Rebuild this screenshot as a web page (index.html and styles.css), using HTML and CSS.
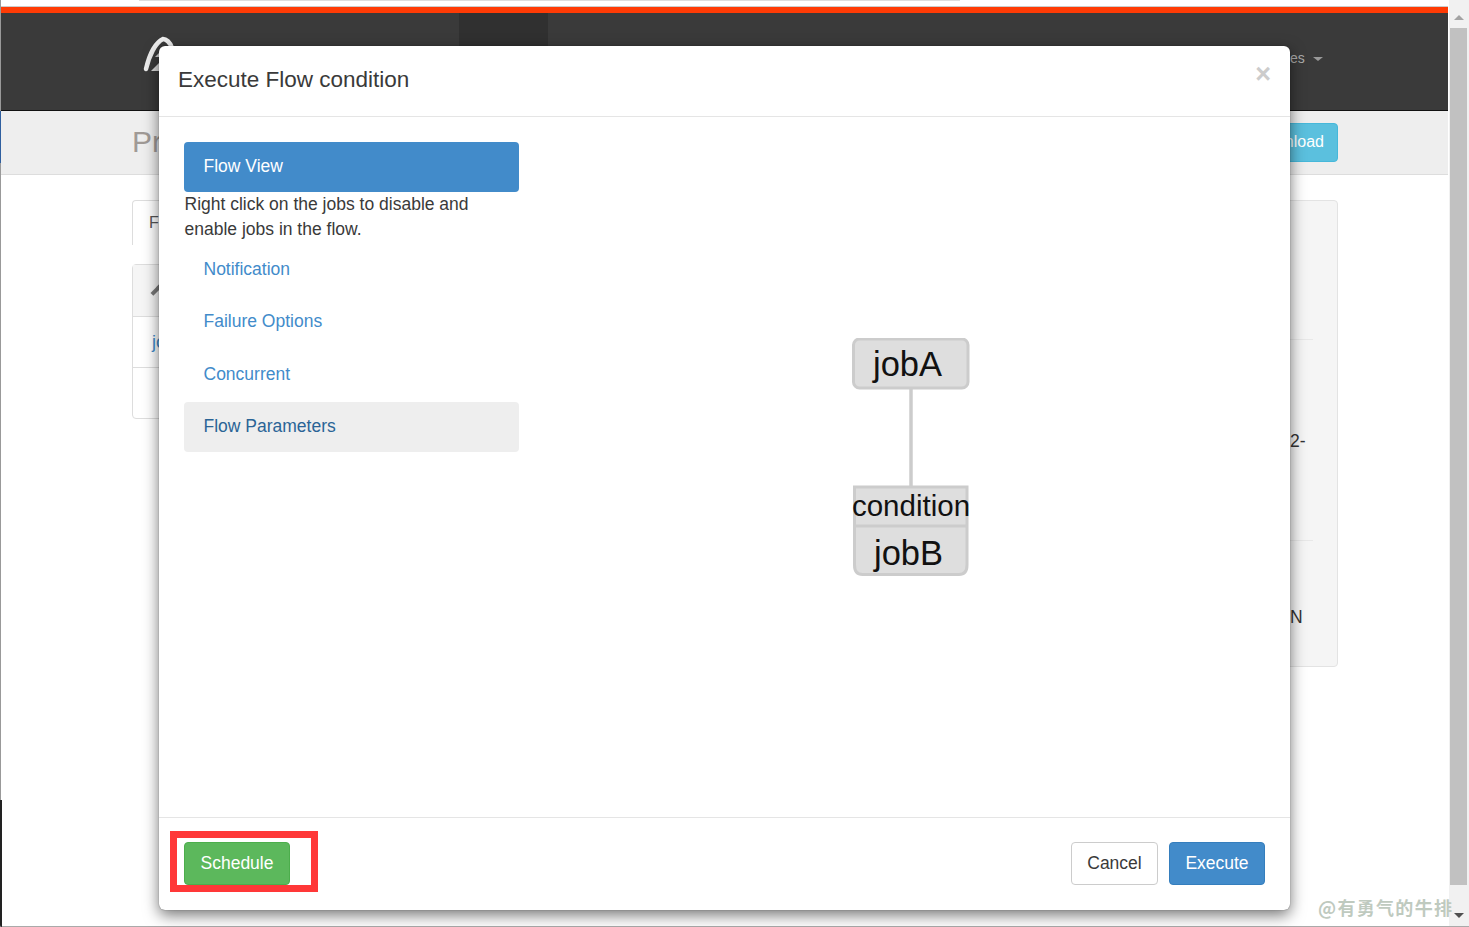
FILE: index.html
```html
<!DOCTYPE html>
<html lang="en">
<head>
<meta charset="utf-8">
<title>Execute Flow condition</title>
<link rel="stylesheet" href="styles.css">
</head>
<body>
<div class="window">
  <div class="page">
    <div class="address-strip"><div class="address-input"></div></div>
    <div class="accent"></div>
    <header class="navbar">
      <svg class="logo" viewBox="0 0 40 44" width="40" height="44"><path d="M5 33 C8 20 14 7 22 3 C25 3 29 6 31 12" fill="none" stroke="#eee" stroke-width="4.500" stroke-linecap="round"/><path d="M10 35 L19 26 V35 Z" fill="#ddd"/><path d="M14 21 L19 16 V21 Z" fill="#ccc"/></svg>
      <div class="nav-active"></div>
      <div class="nav-user">es <span class="caret"></span></div>
    </header>
    <section class="subhead">
      <h1 class="subhead-title">Project</h1>
      <a class="btn-info">Download</a>
    </section>
    <main class="content">
      <div class="left-col">
        <div class="tab">Flow</div>
        <div class="table">
          <div class="table-row table-head"><span class="chev"></span></div>
          <div class="table-row link">jobA</div>
          <div class="table-row"></div>
        </div>
      </div>
      <aside class="side-panel">
        <div class="side-sec">2-</div>
        <div class="side-sec">N</div>
      </aside>
    </main>
  </div>
  <div class="scrollbar">
    <span class="arrow-up"></span>
    <div class="thumb"></div>
    <span class="arrow-down"></span>
  </div>
</div>
<div class="edge-blue"></div>
<div class="edge-dark"></div>

<div class="modal">
  <div class="modal-header">
    <h4 class="modal-title">Execute Flow condition</h4>
    <span class="close">×</span>
  </div>
  <div class="modal-body">
    <nav class="pills">
      <a class="pill pill-active">Flow View</a>
      <p class="pill-note">Right click on the jobs to disable and enable jobs in the flow.</p>
      <a class="pill">Notification</a>
      <a class="pill">Failure Options</a>
      <a class="pill">Concurrent</a>
      <a class="pill pill-hover">Flow Parameters</a>
    </nav>
    <div class="graph">
      <svg class="graph-svg" viewBox="0 0 122 242" width="122" height="242">
        <line x1="61" y1="50" x2="61" y2="149" class="edge"/>
        <rect x="3.500" y="1" width="114.500" height="49" rx="6" class="node"/>
        <path d="M4.500 149 H117 V227 Q117 236.500 109 236.500 H12.500 Q4.500 236.500 4.500 227 Z" class="node"/>
        <line x1="4.500" y1="188" x2="117" y2="188" class="edge-thin"/>
        <text x="57.500" y="38" class="job-label">jobA</text>
        <text x="61" y="178" class="cond-label">condition</text>
        <text x="58.500" y="227" class="job-label">jobB</text>
      </svg>
    </div>
  </div>
  <div class="modal-footer">
    <div class="highlight"><button class="btn btn-success">Schedule</button></div>
    <div class="footer-right">
      <button class="btn btn-default">Cancel</button>
      <button class="btn btn-primary">Execute</button>
    </div>
  </div>
</div>
<div class="watermark">@有勇气的牛排</div>
</body>
</html>
```
FILE: styles.css
```css
*, *::before { box-sizing: border-box; }
html, body { margin: 0; height: 100%; overflow: hidden; }
body { font-family: "Liberation Sans", Arial, sans-serif; font-size: 17.500px; color: #3a3a3a; background: #fff; }

.window { display: flex; height: 927px; border-left: 1px solid #999; border-bottom: 1px solid #aaa; }
.page { width: 1447px; display: flex; flex-direction: column; flex: none; }
.address-strip { height: 7px; background: #fff; border-bottom: 1px solid #ccc; }
.address-input { height: 1px; margin: 0 488px 0 138px; background: #ddd; }
.accent { height: 6px; background: #ff3b05; }
.navbar { height: 98px; background: #3a3a3a; border-bottom: 1px solid #111; position: relative; display: flex; padding-left: 140px; flex: none; }
.logo { margin-top: 23px; flex: none; }
.nav-active { position: absolute; left: 458px; top: 0; width: 89px; height: 97px; background: #303030; }
.nav-user { position: absolute; left: 1289px; top: 35px; font-size: 14px; color: #aaa; line-height: 20px; white-space: nowrap; }
.caret { display: inline-block; margin-left: 4px; vertical-align: middle; border-top: 4px solid #999; border-left: 5px solid transparent; border-right: 5px solid transparent; }
.subhead { height: 64px; background: #eee; border-bottom: 1px solid #ddd; display: flex; justify-content: space-between; align-items: center; padding: 0 110px 0 131px; flex: none; }
.subhead-title { margin: 0 0 2px; font-size: 30px; font-weight: 400; color: #a09a96; line-height: 36px; }
.btn-info { width: 120px; height: 39px; background: #5bc0de; border: 1px solid #46b8da; border-radius: 4px; color: #fff; font-size: 16px; line-height: 36px; text-align: right; padding-right: 13px; }
.content { display: flex; justify-content: space-between; padding: 25px 110px 0 131px; }
.left-col { width: 300px; }
.tab { height: 45px; border: 1px solid #ddd; border-bottom: 0; border-radius: 4px 4px 0 0; padding: 12px 16px; font-size: 16px; color: #555; line-height: 20px; }
.table { margin-top: 19px; height: 155px; border: 1px solid #ddd; border-radius: 4px; }
.table-row { height: 51px; border-bottom: 1px solid #ddd; padding: 14px 19px; line-height: 22px; }
.table-head { height: 52px; background: #f5f5f5; padding-left: 20px; }
.table-row:last-child { border-bottom: 0; }
.chev { display: block; width: 12px; height: 12px; border-top: 4px solid #777; border-left: 4px solid #777; transform: rotate(45deg); margin-top: 8px; }
.link { color: #428bca; font-size: 18px; }
.side-panel { width: 300px; height: 467px; background: #f5f5f5; border: 1px solid #e3e3e3; border-radius: 4px; }
.side-sec { height: 201px; margin: 138px 24px 0 0; padding: 90px 0 0 251px; line-height: 22px; border-top: 1px solid #e8e8e8; font-size: 17.500px; color: #333; }
.side-sec + .side-sec { margin-top: 0; padding-top: 65px; }

.scrollbar { width: 21px; padding: 0 2px 0 1px; background: #f1f1f1; border-left: 1px solid #fff; display: flex; flex-direction: column; align-items: stretch; position: relative; flex: none; }
.thumb { height: 857px; background: #c1c1c1; margin: 28px 0 0; }
.arrow-up { position: absolute; left: 5px; top: 15px; border-bottom: 5px solid #a3a3a3; border-left: 5px solid transparent; border-right: 5px solid transparent; }
.arrow-down { position: absolute; left: 5px; top: 913px; border-top: 5px solid #505050; border-left: 5px solid transparent; border-right: 5px solid transparent; }
.edge-blue { position: absolute; left: 0; top: 111px; width: 1px; height: 52px; background: #2f5f9f; }
.edge-dark { position: absolute; left: 0; top: 800px; width: 2px; height: 127px; background: #222; border-radius: 0 0 0 3px; }

.modal { position: absolute; left: 159px; top: 46px; width: 1131px; height: 864px; background: #fff; border-radius: 6px; box-shadow: 0 5px 15px rgba(0,0,0,.55), 0 0 1px rgba(0,0,0,.6); display: flex; flex-direction: column; }
.modal-header { height: 71px; border-bottom: 1px solid #e5e5e5; display: flex; justify-content: space-between; padding: 19px 19px 0 19px; flex: none; }
.modal-title { margin: 0; font-size: 22.500px; font-weight: 400; line-height: 30px; color: #3a3a3a; }
.close { font-size: 27px; font-weight: 700; line-height: 18px; color: #ccc; margin-top: 0; }
.modal-body { flex: 1; display: flex; padding: 25px; }
.pills { width: 335px; flex: none; display: flex; flex-direction: column; gap: 2.600px; }
.pill { height: 50px; padding: 12px 19.500px; line-height: 25px; color: #428bca; border-radius: 4px; display: block; }
.pill-active { background: #428bca; color: #fff; }
.pill-hover { background: #eee; color: #2a6496; }
.pill-note { margin: -2.600px 0 0 0; padding-left: 0.500px; line-height: 25px; height: 50px; }
.graph { flex: 1; position: relative; display: flex; justify-content: center; padding: 196px 0 0 38px; }
.graph-svg { display: block; }
.node { fill: #dedede; stroke: #ccc; stroke-width: 3; }
.edge { stroke: #ccc; stroke-width: 3.500; }
.edge-thin { stroke: #ccc; stroke-width: 3; }
.job-label { font-size: 34.500px; text-anchor: middle; fill: #111; }
.cond-label { font-size: 29.500px; text-anchor: middle; fill: #111; }

.modal-footer { height: 93px; border-top: 1px solid #e5e5e5; display: flex; justify-content: space-between; align-items: flex-start; padding: 24px 25px 0; flex: none; }
.highlight { position: relative; }
.highlight::before { content: ""; position: absolute; left: -14px; top: -11px; width: 148px; height: 61px; border: 7px solid #ff3838; }
.footer-right { display: flex; gap: 11px; }
.btn { height: 43px; border-radius: 4px; font-family: inherit; font-size: 17.500px; border: 1px solid transparent; padding: 0 15px; position: relative; }
.btn-success { width: 106px; background: #5cb85c; border-color: #4cae4c; color: #fff; }
.btn-default { width: 87px; background: #fff; border-color: #ccc; color: #3a3a3a; }
.btn-primary { width: 96px; background: #428bca; border-color: #357ebd; color: #fff; }

.watermark { position: absolute; left: 1318px; top: 895px; font-family: "Noto Sans CJK SC", sans-serif; font-size: 18px; font-weight: 700; line-height: 24px; letter-spacing: 1.300px; color: #bfcabf; white-space: nowrap; }
```
